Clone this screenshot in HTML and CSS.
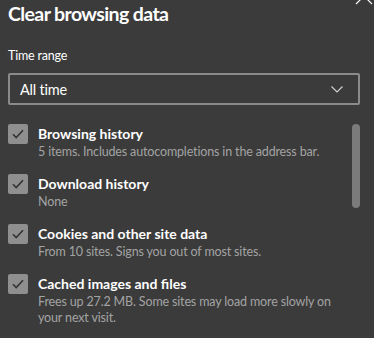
FILE: index.html
```html
<!DOCTYPE html>
<html>
<head>
<meta charset="utf-8">
<link rel="stylesheet" href="styles.css">
</head>
<body>
<div class="dialog">
  <svg class="close" width="18" height="18" viewBox="0 0 18 18"><path d="M1 1L17 17M17 1L1 17" stroke="#ffffff" stroke-width="1.2" fill="none"/></svg>
  <h1 class="title">Clear browsing data</h1>
  <div class="field-label">Time range</div>
  <div class="select">
    <span class="select-text">All time</span>
    <svg class="chevron" width="12" height="7" viewBox="0 0 12 7"><path d="M0.5 0.5L6 6L11.5 0.5" stroke="#d0d0d0" stroke-width="1.2" fill="none"/></svg>
  </div>
  <div class="list-wrap">
    <div class="list">
      <div class="row">
        <span class="check"><svg width="12" height="10" viewBox="0 0 12 10"><path d="M1 5.2L4.2 8.5L11 1.2" stroke="#333333" stroke-width="1.6" fill="none"/></svg></span>
        <div class="row-text">
          <div class="row-title">Browsing history</div>
          <div class="row-desc">5 items. Includes autocompletions in the address bar.</div>
        </div>
      </div>
      <div class="row">
        <span class="check"><svg width="12" height="10" viewBox="0 0 12 10"><path d="M1 5.2L4.2 8.5L11 1.2" stroke="#333333" stroke-width="1.6" fill="none"/></svg></span>
        <div class="row-text">
          <div class="row-title">Download history</div>
          <div class="row-desc">None</div>
        </div>
      </div>
      <div class="row">
        <span class="check"><svg width="12" height="10" viewBox="0 0 12 10"><path d="M1 5.2L4.2 8.5L11 1.2" stroke="#333333" stroke-width="1.6" fill="none"/></svg></span>
        <div class="row-text">
          <div class="row-title">Cookies and other site data</div>
          <div class="row-desc">From 10 sites. Signs you out of most sites.</div>
        </div>
      </div>
      <div class="row">
        <span class="check"><svg width="12" height="10" viewBox="0 0 12 10"><path d="M1 5.2L4.2 8.5L11 1.2" stroke="#333333" stroke-width="1.6" fill="none"/></svg></span>
        <div class="row-text">
          <div class="row-title">Cached images and files</div>
          <div class="row-desc">Frees up 27.2 MB. Some sites may load more slowly on your next visit.</div>
        </div>
      </div>
    </div>
    <div class="scrollbar"><div class="thumb"></div></div>
  </div>
</div>
</body>
</html>
```
FILE: styles.css
```css
html, body {
  margin: 0;
  padding: 0;
  background: #3b3b3b;
  height: 100%;
  overflow: hidden;
}
.dialog {
  position: relative;
  padding: 0 14px 0 8px;
  font-family: "Lato", "Open Sans", sans-serif;
  color: #ffffff;
}
.close {
  position: absolute;
  top: -13px;
  right: 1px;
}
.title {
  margin: 0;
  font-size: 19.5px;
  font-weight: 700;
  line-height: 28px;
  height: 28px;
  letter-spacing: -0.6px;
}
.field-label {
  margin-top: 18px;
  font-size: 12.5px;
  line-height: 20px;
  letter-spacing: -0.2px;
}
.select {
  margin-top: 7px;
  height: 28px;
  border: 2px solid #8a8a8a;
  border-radius: 2px;
  display: flex;
  align-items: center;
  justify-content: space-between;
  padding: 0 15px 0 10px;
}
.select-text {
  font-size: 14.5px;
  letter-spacing: -0.2px;
}
.chevron {
  display: block;
}
.list-wrap {
  display: flex;
  margin-top: 19px;
}
.list {
  flex: 1;
  display: flex;
  flex-direction: column;
  gap: 14px;
}
.row {
  display: flex;
  gap: 10px;
}
.check {
  flex: none;
  width: 20px;
  height: 20px;
  border-radius: 2px;
  background: #8f8f8f;
  display: flex;
  align-items: center;
  justify-content: center;
}
.check svg {
  display: block;
}
.row-text {
  flex: 1;
  padding-right: 10px;
}
.row-title {
  font-size: 14px;
  font-weight: 700;
  line-height: 20px;
}
.row-desc {
  font-size: 12.5px;
  line-height: 16px;
  color: #a3a3a3;
  letter-spacing: -0.15px;
}
.scrollbar {
  flex: none;
  width: 8px;
}
.thumb {
  height: 84px;
  width: 8px;
  border-radius: 4px;
  background: #7b7b7b;
}
```
